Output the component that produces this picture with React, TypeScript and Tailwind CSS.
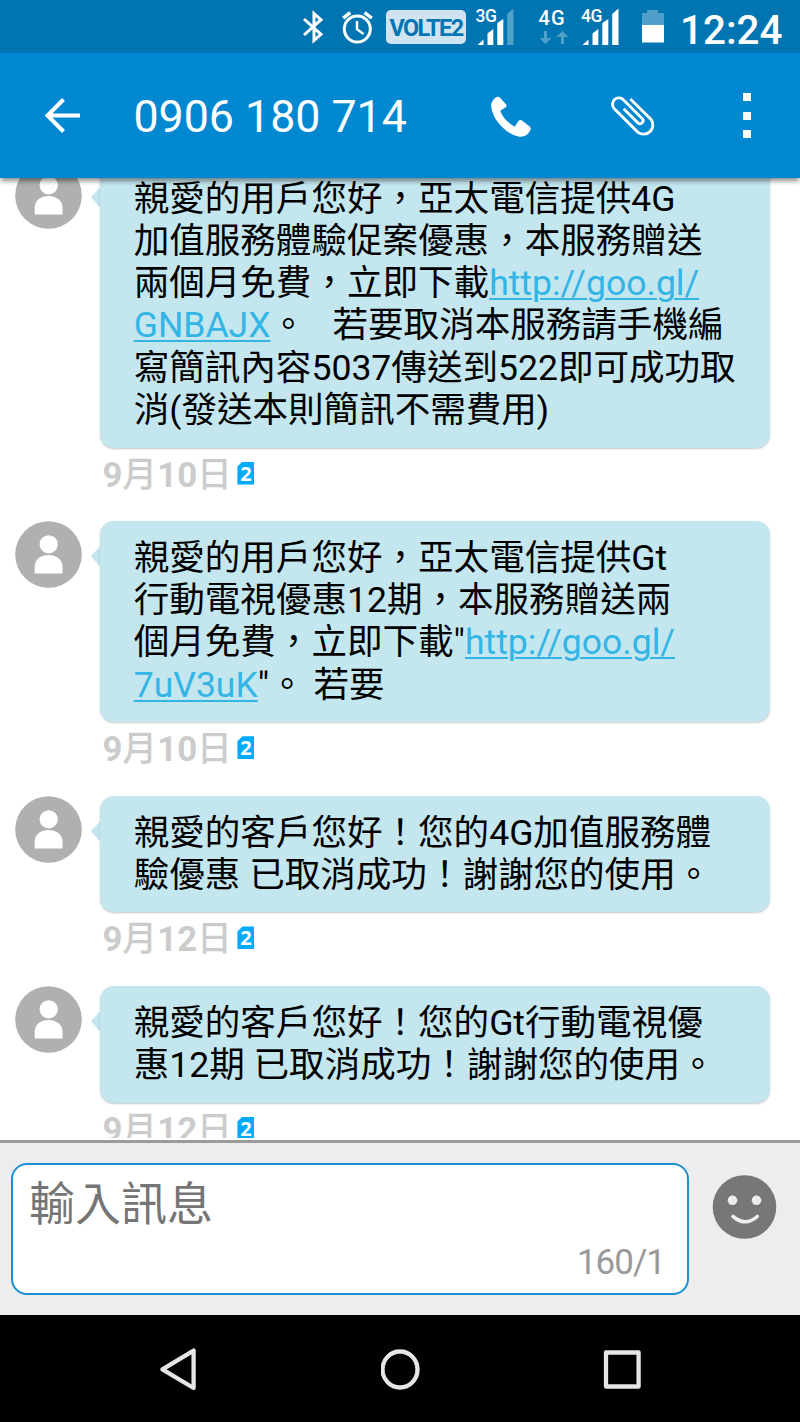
import { Fragment, memo } from "react";

interface MessagePart {
  text: string;
  link?: boolean;
}

interface Message {
  id: number;
  lines: MessagePart[][];
  date: [string, string, string, string];
}

const messages: Message[] = [
  {
    id: 1,
    lines: [
      [{ text: "親愛的用戶您好，亞太電信提供4G" }],
      [{ text: "加值服務體驗促案優惠，本服務贈送" }],
      [{ text: "兩個月免費，立即下載" }, { text: "http://goo.gl/", link: true }],
      [
        { text: "GNBAJX", link: true },
        { text: "。   若要取消本服務請手機編" },
      ],
      [{ text: "寫簡訊內容5037傳送到522即可成功取" }],
      [{ text: "消(發送本則簡訊不需費用)" }],
    ],
    date: ["9", "月", "10", "日"],
  },
  {
    id: 2,
    lines: [
      [{ text: "親愛的用戶您好，亞太電信提供Gt" }],
      [{ text: "行動電視優惠12期，本服務贈送兩" }],
      [{ text: '個月免費，立即下載"' }, { text: "http://goo.gl/", link: true }],
      [{ text: "7uV3uK", link: true }, { text: '"。 若要' }],
    ],
    date: ["9", "月", "10", "日"],
  },
  {
    id: 3,
    lines: [
      [{ text: "親愛的客戶您好！您的4G加值服務體" }],
      [{ text: "驗優惠 已取消成功！謝謝您的使用。" }],
    ],
    date: ["9", "月", "12", "日"],
  },
  {
    id: 4,
    lines: [
      [{ text: "親愛的客戶您好！您的Gt行動電視優" }],
      [{ text: "惠12期 已取消成功！謝謝您的使用。" }],
    ],
    date: ["9", "月", "12", "日"],
  },
];

const Signal = ({ label, weak }: { label: string; weak?: boolean }) => (
  <div className="relative h-[38px] w-[38px]">
    <span className="absolute left-0 top-0 text-[17.5px] leading-[17px] font-medium tracking-[-0.5px]">
      {label}
    </span>
    <svg className="h-full w-full" viewBox="0 0 38 38" fill="white">
      <path d="M1.5 37 L7.5 31.5 V37 Z" />
      <path d="M11.5 37 V25.5 L17.3 21 V37 Z" />
      <path d="M21.3 37 V15 L27.3 11 V37 Z" />
      <path d="M31.2 37 V6 L37.5 0.5 V37 Z" fillOpacity={weak ? 0.32 : 1} />
    </svg>
  </div>
);

const StatusBar = () => (
  <header className="flex h-[53px] shrink-0 items-center bg-[#0175b2] pl-[303px] text-white">
    {/* Bluetooth */}
    <svg
      className="h-[34px] w-[21px]"
      viewBox="0 0 21 34"
      fill="none"
      stroke="white"
      strokeWidth="3">
      <path d="M1 9 L18 24.3 L11 30.4 V3.6 L18 9.7 L1 25" />
    </svg>
    {/* Alarm */}
    <svg
      className="ml-[17px] h-[34px] w-[34px]"
      viewBox="0 0 34 34"
      fill="none"
      stroke="white"
      strokeWidth="3">
      <circle cx="16.3" cy="19" r="13" />
      <path d="M2.2 8.2 L9.3 2.6 M23.5 2.6 L30.8 8.2" strokeWidth="3.4" />
      <path d="M16 11 V19.2 L22.5 24" strokeWidth="2.4" />
    </svg>
    <div className="ml-[11px] flex h-[34px] w-[80px] items-center justify-center rounded-[5px] bg-[#cfe3f0] pt-[2px] text-[23.5px] leading-[28px] font-bold tracking-[-1.6px] text-[#0175b2]">
      VOLTE2
    </div>
    <div className="ml-[9.5px]">
      <Signal label="3G" weak />
    </div>
    {/* Data activity */}
    <div className="ml-[25px] flex h-[36px] w-[30px] flex-col justify-between">
      <span className="text-[20px] leading-[18px] font-medium tracking-[1.2px]">4G</span>
      <svg className="h-[14px] w-[30px]" viewBox="0 0 30 14" fill="#4f9fca">
        <path d="M5 0 H8 V7 H12.5 L6.5 13 L0.5 7 H5 Z" />
        <path d="M22 13 H25 V6 H29.5 L23.5 0 L17 6 H22 Z" />
      </svg>
    </div>
    <div className="ml-[12.5px]">
      <Signal label="4G" />
    </div>
    {/* Battery */}
    <svg className="ml-[23px] h-[33px] w-[22px]" viewBox="0 0 22 33">
      <path d="M0 3 H5 V0 H16 V3 H22 V15 H0 Z" fill="#4f9fca" />
      <path d="M0 15 H22 V32.5 H0 Z" fill="white" />
    </svg>
    <span className="ml-[16px] pt-[7px] text-[40.4px] leading-[47px] font-medium">12:24</span>
  </header>
);

const AppBar = () => (
  <nav className="z-10 flex h-[125px] shrink-0 items-center bg-[#0288d1] pl-[44px] text-white shadow-[0_4px_5px_-1px_rgba(0,0,0,0.45)]">
    <svg
      className="h-[38px] w-[38px]"
      viewBox="0 0 38 38"
      fill="none"
      stroke="white"
      strokeWidth="4">
      <path d="M19.5 2.5 L3.5 18.5 L19.5 34.5 M3.5 18.5 H36" />
    </svg>
    <h1 className="ml-[51.5px] w-[299.5px] pt-[3px] text-[44.7px] leading-[52px] font-normal">
      0906 180 714
    </h1>
    {/* Call */}
    <svg className="ml-[57px] h-[42px] w-[42px]" viewBox="88 105 126 126" fill="white">
      <path d="M104 113 Q112 108 118 113 L136 133 Q139 138 136 141 L119 152 Q128 180 162 200 L174 182 Q178 178 183 181 L208 200 Q212 205 209 210 Q200 232 176 230 Q135 222 104 176 Q86 142 94 126 Q97 118 104 113 Z" />
    </svg>
    {/* Attachment */}
    <svg
      className="ml-[79px] h-[42px] w-[46px]"
      viewBox="454 104 138 126"
      fill="none"
      stroke="white"
      strokeWidth="8.5">
      <path d="M512 116 L575 178 A28 28 0 0 1 535 216 L464 145 A19 19 0 0 1 491 118 L549 176 A9.5 9.5 0 0 1 536 189 L492 145" />
    </svg>
    {/* Overflow menu */}
    <div className="ml-[85.5px] flex h-[45px] w-[8px] flex-col justify-between">
      <i className="h-2 w-2 bg-white" />
      <i className="h-2 w-2 bg-white" />
      <i className="h-2 w-2 bg-white" />
    </div>
  </nav>
);

const Avatar = () => (
  <svg className="h-[67px] w-[67px] shrink-0" viewBox="0 0 67 67">
    <circle cx="33.5" cy="33.5" r="33.3" fill="#b0b0b0" />
    <g fill="white">
      <circle cx="33.7" cy="23.3" r="9.1" />
      <path d="M19.7 52.5 V46 C19.7 38 26 34 33.5 34 C41 34 47.5 38 47.5 46 V52.5 Z" />
    </g>
  </svg>
);

const MessageRow = ({ message }: { message: Message }) => (
  <article className="flex items-start pl-[15.4px]">
    <Avatar />
    {/* Bubble tail */}
    <svg className="mt-[25px] ml-[9px] h-[21px] w-[9px] shrink-0" viewBox="0 0 9 21">
      <path d="M9 0.5 L0.8 9 Q0 10.3 0.8 11.5 L9 20.5 Z" fill="#c3e6ef" />
    </svg>
    <div>
      <div className="w-[670px] rounded-[14px] bg-[#c3e6ef] pt-[16px] pb-[16.3px] pl-[33.3px] text-[35.56px] leading-[42.25px] text-black shadow-[0_1px_2px_rgba(0,0,0,0.22)]">
        {message.lines.map((line, i) => (
          <p key={i} className="whitespace-pre">
            {line.map((part, j) =>
              part.link ? (
                <a
                  key={j}
                  className="text-[#33b5e5] underline decoration-[2px] underline-offset-[3px]">
                  {part.text}
                </a>
              ) : (
                <Fragment key={j}>{part.text}</Fragment>
              ),
            )}
          </p>
        ))}
      </div>
      {/* Date + SIM slot */}
      <div className="flex h-[73.4px] items-start pt-[6px] pl-[2px] text-[34.8px] leading-[42px] font-medium text-[#cccccc]">
        <span className="whitespace-pre">
          <b>{message.date[0]}</b>
          {message.date[1]}
          <b>{message.date[2]}</b>
          {message.date[3]}
        </span>
        <span className="mt-[8px] ml-[5.5px] flex h-[23px] w-[17px] items-center justify-center bg-[#00aaff] font-['Open_Sans'] text-[20px] leading-[23px] font-bold text-white [clip-path:polygon(5px_0,100%_0,100%_100%,0_100%,0_5px)]">
          2
        </span>
      </div>
    </div>
  </article>
);

const Composer = () => (
  <footer className="mt-[2px] flex h-[175px] shrink-0 items-start border-t-[3px] border-[#9b9b9b] bg-[#ecedef] pt-[20px] pl-[11px]">
    <div className="flex h-[132px] w-[678px] flex-col justify-between rounded-[16px] border-2 border-[#1a8fd4] bg-white pt-[11px] pr-[22px] pb-[9px] pl-[16px]">
      <span className="text-[46px] leading-[56px] text-[#757575]">輸入訊息</span>
      <span className="self-end text-[35px] leading-[42px] tracking-[-1px] text-[#999999]">
        160/1
      </span>
    </div>
    <svg className="mt-[12px] ml-[23px] h-[64px] w-[65px]" viewBox="0 0 65 64">
      <circle cx="32.5" cy="32" r="31.8" fill="#777777" />
      <g fill="#ecedef">
        <circle cx="20.5" cy="25.3" r="4.8" />
        <circle cx="44.5" cy="25.3" r="4.8" />
      </g>
      <path
        d="M21 41.5 Q33.5 52 45.3 41.5"
        fill="none"
        stroke="#ecedef"
        strokeWidth="3.6"
        strokeLinecap="round"
      />
    </svg>
  </footer>
);

const NavigationBar = () => (
  <div className="flex h-[107px] shrink-0 items-center justify-between bg-black pr-[157px] pl-[158px]">
    <svg
      className="h-[44px] w-[40px]"
      viewBox="0 0 40 44"
      fill="none"
      stroke="#e6e6e6"
      strokeWidth="4.3"
      strokeLinejoin="round">
      <path d="M4.4 22.3 L35.6 3.6 V41 Z" />
    </svg>
    <svg
      className="h-[44px] w-[40px]"
      viewBox="0 0 40 44"
      fill="none"
      stroke="#e6e6e6"
      strokeWidth="4.3">
      <ellipse cx="19" cy="22.5" rx="17.5" ry="18" />
    </svg>
    <svg
      className="h-[44px] w-[40px]"
      viewBox="0 0 40 44"
      fill="none"
      stroke="#e6e6e6"
      strokeWidth="4.3"
      strokeLinejoin="round">
      <rect x="3" y="5.5" width="32.6" height="34" />
    </svg>
  </div>
);

const App = () => {
  return (
    <main className="flex h-[1422px] w-[800px] flex-col overflow-hidden bg-white font-[Roboto,'Noto_Sans_CJK_TC',sans-serif]">
      <StatusBar />
      <AppBar />
      {/* Conversation Start */}
      <section className="min-h-0 flex-1 overflow-hidden">
        <div className="-mt-[16.3px]">
          {messages.map((message) => (
            <MessageRow key={message.id} message={message} />
          ))}
        </div>
      </section>
      {/* Conversation End */}
      <Composer />
      <NavigationBar />
    </main>
  );
};

export default memo(App);
